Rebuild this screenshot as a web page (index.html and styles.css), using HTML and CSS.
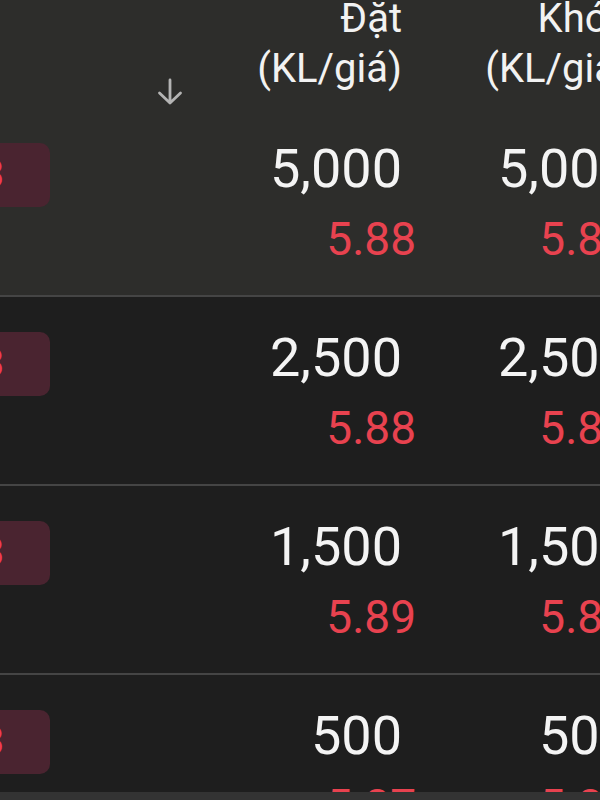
FILE: index.html
```html
<!DOCTYPE html>
<html>

<head>
  <title>Sổ lệnh</title>
  <link rel="stylesheet" href="styles.css">
</head>

<body>
  <div class="order-table">
    <div class="table-head">
      <div class="col-side">
        <svg class="sort-icon" viewBox="0 0 30 30" width="30" height="30">
          <path d="M15 3 V26 M4.5 16 L15 26 L25.5 16" fill="none" stroke="#b4b4b4" stroke-width="2.8"
            stroke-linecap="round" stroke-linejoin="round" />
        </svg>
      </div>
      <div class="col-qty head-label">Đặt<br>(KL/giá)</div>
      <div class="col-qty col-last head-label">Khớp<br>(KL/giá)</div>
    </div>

    <div class="order-row active">
      <div class="col-side"><span class="side-badge">3</span></div>
      <div class="col-qty">
        <div class="qty">5,000</div>
        <div class="price">5.88</div>
      </div>
      <div class="col-qty col-last">
        <div class="qty">5,000</div>
        <div class="price">5.88</div>
      </div>
    </div>

    <div class="order-row">
      <div class="col-side"><span class="side-badge">3</span></div>
      <div class="col-qty">
        <div class="qty">2,500</div>
        <div class="price">5.88</div>
      </div>
      <div class="col-qty col-last">
        <div class="qty">2,500</div>
        <div class="price">5.88</div>
      </div>
    </div>

    <div class="order-row">
      <div class="col-side"><span class="side-badge">3</span></div>
      <div class="col-qty">
        <div class="qty">1,500</div>
        <div class="price">5.89</div>
      </div>
      <div class="col-qty col-last">
        <div class="qty">1,500</div>
        <div class="price">5.89</div>
      </div>
    </div>

    <div class="order-row">
      <div class="col-side"><span class="side-badge">3</span></div>
      <div class="col-qty">
        <div class="qty">500</div>
        <div class="price">5.87</div>
      </div>
      <div class="col-qty col-last">
        <div class="qty">500</div>
        <div class="price">5.87</div>
      </div>
    </div>
  </div>

  <div class="bottom-bar"></div>
</body>

</html>
```

FILE: styles.css
```css
body {
  margin: 0;
  background-color: #1e1e1e;
  font-family: Roboto, 'Noto Sans', sans-serif;
  color: #f2f2f2;
  overflow: hidden;
  height: 800px;
}

.order-table {
  width: 720px;
  margin-left: -40px;
}

.table-head {
  display: flex;
  height: 108px;
  background-color: #2d2d2b;
}

.table-head .col-side {
  display: flex;
  justify-content: flex-end;
  align-items: flex-end;
  padding-bottom: 1px;
  box-sizing: border-box;
}

.sort-icon {
  margin-right: 3px;
}

.col-side {
  width: 228px;
  flex-shrink: 0;
}

.col-qty {
  width: 228px;
  flex-shrink: 0;
  text-align: right;
  box-sizing: border-box;
}

.head-label {
  font-size: 40px;
  line-height: 50px;
  margin-top: -6px;
  padding-right: 14px;
}

.order-row {
  display: flex;
  height: 189px;
  box-sizing: border-box;
  border-bottom: 2px solid #454545;
}

.order-row.active {
  background-color: #2d2d2b;
}

.order-row .col-side {
  padding-top: 35px;
  box-sizing: border-box;
}

.side-badge {
  display: block;
  width: 90px;
  height: 64px;
  box-sizing: border-box;
  padding-right: 46px;
  background-color: #4a2430;
  border-radius: 10px;
  color: #f03c52;
  font-size: 40px;
  font-weight: 500;
  line-height: 64px;
  text-align: right;
}

.qty {
  padding-top: 31px;
  padding-right: 14px;
  font-size: 54px;
  line-height: 60px;
  color: #f4f4f4;
}

.price {
  margin-top: 14px;
  font-size: 46px;
  line-height: 52px;
  color: #e8424f;
}

.col-last .price {
  padding-right: 15px;
}

/* bar that sits over the bottom of the list */
.bottom-bar {
  position: fixed;
  left: 0;
  right: 0;
  bottom: 0;
  height: 8px;
  background-color: #333333;
}
```
